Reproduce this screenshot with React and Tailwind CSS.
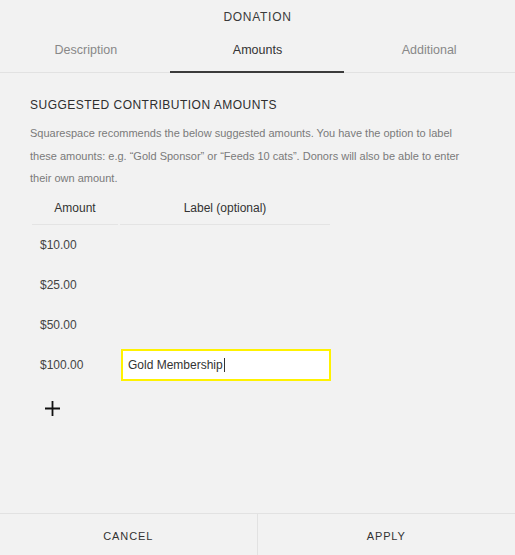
export default function App() {
  const amounts = ['$10.00', '$25.00', '$50.00'];

  return (
    <div className="w-[515px] h-[555px] bg-[#f2f2f2] flex flex-col font-['Liberation_Sans',Arial,sans-serif] text-[#333]">
      <div className="h-[33px] flex items-center justify-center text-[12px] tracking-[0.06em] text-[#3a3a3a] pt-[1px]">
        DONATION
      </div>

      <div className="grid grid-cols-3 border-b border-[#e2e2e2] h-[40px]">
        <button className="text-[12.5px] text-[#888] pb-[5px]">Description</button>
        <button className="text-[12.5px] text-[#333] pb-[5px] relative">
          Amounts
          <span className="absolute left-[-2px] right-[-1px] bottom-[-1px] h-[2px] bg-[#3c3c3c]" />
        </button>
        <button className="text-[12.5px] text-[#888] pb-[5px]">Additional</button>
      </div>

      <div className="flex-1 px-[30px] pt-[24px]">
        <h2 className="text-[12px] tracking-[0.04em] text-[#2e2e2e] leading-[16px]">
          SUGGESTED CONTRIBUTION AMOUNTS
        </h2>
        <p className="mt-[9px] text-[11px] leading-[22.5px] text-[#7a7a7a] pr-[20px]">
          Squarespace recommends the below suggested amounts. You have the option to label
          these amounts: e.g. “Gold Sponsor” or “Feeds 10 cats”. Donors will also be able to enter
          their own amount.
        </p>

        <div className="mt-[3px] ml-[2px] w-[300px]">
          <div className="flex gap-[2px] text-[12px] text-[#333]">
            <div className="w-[86px] h-[32px] flex items-center justify-center border-b border-[#e4e4e4]">Amount</div>
            <div className="w-[210px] h-[32px] flex items-center justify-center border-b border-[#e4e4e4]">Label (optional)</div>
          </div>

          {amounts.map((a) => (
            <div key={a} className="flex h-[40px] items-center text-[12px] text-[#444]">
              <div className="w-[89px] pl-[8px]">{a}</div>
            </div>
          ))}

          <div className="flex h-[40px] items-center text-[12px] text-[#444]">
            <div className="w-[89px] pl-[8px]">$100.00</div>
            <div className="w-[210px] h-[32px] bg-white border-2 border-[#fff200] flex items-center pl-[5px] text-[12px] text-[#333]">
              Gold Membership<span className="w-[1px] h-[14px] bg-[#333] ml-[1px]" />
            </div>
          </div>

          <button className="mt-[16px] ml-[12px] w-[16px] h-[16px] flex items-center justify-center">
            <svg width="15" height="15" viewBox="0 0 15 15">
              <path d="M7.5 0v15M0 7.5h15" stroke="#111" strokeWidth="1.8" />
            </svg>
          </button>
        </div>
      </div>

      <div className="grid grid-cols-2 border-t border-[#e2e2e2] h-[42px]">
        <button className="text-[11px] tracking-[0.08em] text-[#333] border-r border-[#e2e2e2] pt-[3px]">CANCEL</button>
        <button className="text-[11px] tracking-[0.08em] text-[#333] pt-[3px]">APPLY</button>
      </div>
    </div>
  );
}
